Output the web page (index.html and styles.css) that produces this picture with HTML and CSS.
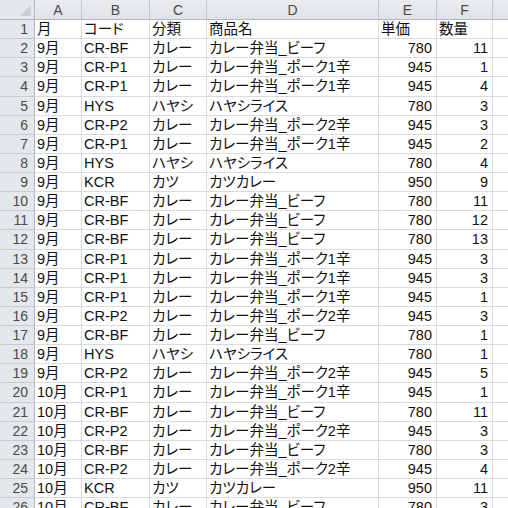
FILE: index.html
```html
<!DOCTYPE html>
<html lang="ja">
<head>
<meta charset="utf-8">
<link rel="stylesheet" href="styles.css">
</head>
<body>
<div class="sheet" id="sheet">
  <div class="corner"><span class="tri"></span></div>
  <div class="ch">A</div><div class="ch">B</div><div class="ch">C</div><div class="ch">D</div><div class="ch">E</div><div class="ch">F</div><div class="ch last"></div>
</div>
<script src="app.js"></script>
</body>
</html>
```
FILE: app.js
```js
const rows = [
  ["月","コード","分類","商品名","単価","数量"],
  ["9月","CR-BF","カレー","カレー弁当_ビーフ",780,11],
  ["9月","CR-P1","カレー","カレー弁当_ポーク1辛",945,1],
  ["9月","CR-P1","カレー","カレー弁当_ポーク1辛",945,4],
  ["9月","HYS","ハヤシ","ハヤシライス",780,3],
  ["9月","CR-P2","カレー","カレー弁当_ポーク2辛",945,3],
  ["9月","CR-P1","カレー","カレー弁当_ポーク1辛",945,2],
  ["9月","HYS","ハヤシ","ハヤシライス",780,4],
  ["9月","KCR","カツ","カツカレー",950,9],
  ["9月","CR-BF","カレー","カレー弁当_ビーフ",780,11],
  ["9月","CR-BF","カレー","カレー弁当_ビーフ",780,12],
  ["9月","CR-BF","カレー","カレー弁当_ビーフ",780,13],
  ["9月","CR-P1","カレー","カレー弁当_ポーク1辛",945,3],
  ["9月","CR-P1","カレー","カレー弁当_ポーク1辛",945,3],
  ["9月","CR-P1","カレー","カレー弁当_ポーク1辛",945,1],
  ["9月","CR-P2","カレー","カレー弁当_ポーク2辛",945,3],
  ["9月","CR-BF","カレー","カレー弁当_ビーフ",780,1],
  ["9月","HYS","ハヤシ","ハヤシライス",780,1],
  ["9月","CR-P2","カレー","カレー弁当_ポーク2辛",945,5],
  ["10月","CR-P1","カレー","カレー弁当_ポーク1辛",945,1],
  ["10月","CR-BF","カレー","カレー弁当_ビーフ",780,11],
  ["10月","CR-P2","カレー","カレー弁当_ポーク2辛",945,3],
  ["10月","CR-BF","カレー","カレー弁当_ビーフ",780,3],
  ["10月","CR-P2","カレー","カレー弁当_ポーク2辛",945,4],
  ["10月","KCR","カツ","カツカレー",950,11],
  ["10月","CR-BF","カレー","カレー弁当_ビーフ",780,3]
];
const sheet = document.getElementById("sheet");
rows.forEach((r, i) => {
  const rh = document.createElement("div");
  rh.className = "rh";
  rh.textContent = i + 1;
  sheet.appendChild(rh);
  r.forEach(v => {
    const c = document.createElement("div");
    c.className = "cell" + (typeof v === "number" ? " num" : "");
    c.textContent = v;
    sheet.appendChild(c);
  });
  const e = document.createElement("div");
  e.className = "cell";
  sheet.appendChild(e);
});
```
FILE: styles.css
```css
html, body {
  margin: 0;
  padding: 0;
  background: #ffffff;
  overflow: hidden;
}
.sheet {
  display: grid;
  grid-template-columns: 35px 47px 68px 57px 172px 58px 56px 40px;
  grid-template-rows: 20px;
  grid-auto-rows: 19.125px;
  font-family: "Liberation Sans", "Noto Sans CJK JP", sans-serif;
  font-size: 14.5px;
  font-feature-settings: "palt";
  color: #111;
}
.corner {
  position: relative;
  background: #e4e7eb;
  border-right: 1px solid #b4b8bd;
  border-bottom: 1px solid #b4b8bd;
  box-sizing: border-box;
}
.tri {
  position: absolute;
  right: 3px;
  bottom: 3px;
  width: 0;
  height: 0;
  border-left: 11px solid transparent;
  border-bottom: 11px solid #c9ccd0;
}
.ch {
  background: linear-gradient(#eaecef, #dfe2e6);
  border-right: 1px solid #c2c6cb;
  border-bottom: 1px solid #b4b8bd;
  box-sizing: border-box;
  text-align: center;
  color: #4a4a4a;
  line-height: 20px;
  font-size: 14px;
}
.rh {
  background: #e4e7eb;
  border-right: 1px solid #b4b8bd;
  border-bottom: 1px solid #c8ccd1;
  box-sizing: border-box;
  text-align: right;
  padding-right: 6px;
  color: #4a4a4a;
  line-height: 19px;
  font-size: 14px;
  overflow: hidden;
}
.cell {
  border-right: 1px solid #d9dbde;
  border-bottom: 1px solid #d9dbde;
  box-sizing: border-box;
  padding-left: 2px;
  line-height: 19px;
  white-space: nowrap;
  overflow: visible;
}
.num {
  text-align: right;
  padding-right: 4px;
}
```
